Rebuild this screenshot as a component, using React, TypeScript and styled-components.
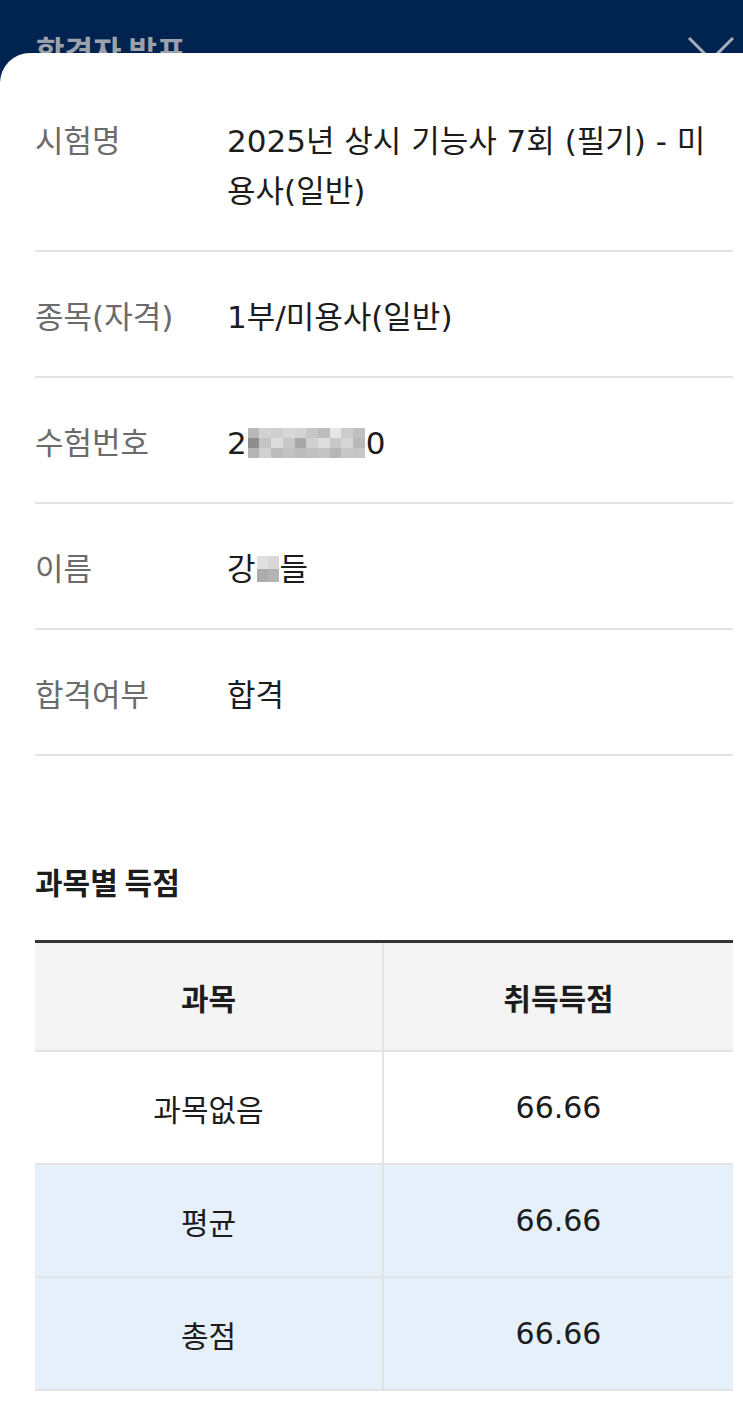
import React from "react";
import styled, { createGlobalStyle } from "styled-components";

const Global = createGlobalStyle`
  html, body { margin: 0; padding: 0; background: #ffffff; }
  body { font-family: "DejaVu Sans", "Noto Sans CJK KR", sans-serif; }
  * { box-sizing: border-box; }
`;

const Page = styled.div`
  width: 743px;
  height: 1415px;
  background: #002350;
  overflow: hidden;
`;

const TopBar = styled.div`
  height: 53px;
  padding: 0 9px 0 36px;
  display: flex;
  align-items: flex-start;
  justify-content: space-between;
  overflow: hidden;
`;

const Title = styled.div`
  margin-top: 31px;
  font-family: "Noto Sans CJK KR", sans-serif;
  font-size: 31px;
  font-weight: 700;
  color: #9ca2ac;
  line-height: 1.2;
`;

const CloseIcon = styled.svg`
  width: 46px;
  height: 46px;
  margin-top: 37px;
  flex-shrink: 0;
`;

const Sheet = styled.div`
  background: #ffffff;
  border-radius: 30px 0 0 0;
  height: 1362px;
  padding: 23px 10px 0 35px;
`;

const InfoRow = styled.div`
  display: flex;
  padding: 40px 0 34px;
  border-bottom: 2px solid #e3e3e3;
`;

const Label = styled.div`
  width: 192px;
  flex-shrink: 0;
  font-size: 31px;
  line-height: 50px;
  color: #6b6b6b;
`;

const Value = styled.div`
  flex: 1;
  font-size: 31px;
  line-height: 50px;
  color: #1c1c1c;
  padding-right: 20px;
`;

const Inline = styled.div`
  display: flex;
  align-items: center;
`;

const Mosaic = styled.span<{ $w: number; $h: number; $rows: number }>`
  display: inline-grid;
  width: ${(p) => p.$w}px;
  height: ${(p) => p.$h}px;
  grid-auto-flow: column;
  grid-template-rows: repeat(${(p) => p.$rows}, 1fr);
  margin: 0 1px;
`;

const Cell = styled.span<{ $c: string }>`
  background: ${(p) => p.$c};
`;

const SectionTitle = styled.div`
  margin-top: 105px;
  font-family: "Noto Sans CJK KR", sans-serif;
  font-size: 30px;
  font-weight: 700;
  color: #1c1c1c;
  line-height: 40px;
`;

const Table = styled.div`
  margin-top: 39px;
  border-top: 3px solid #333333;
  display: grid;
  grid-template-columns: 349px 349px;
`;

const TCell = styled.div<{ $bg: string; $head?: boolean; $h: number }>`
  height: ${(p) => p.$h}px;
  background: ${(p) => p.$bg};
  display: flex;
  align-items: center;
  justify-content: center;
  font-size: 30px;
  font-weight: ${(p) => (p.$head ? 700 : 400)};
  font-family: ${(p) => (p.$head ? `"Noto Sans CJK KR", sans-serif` : `"DejaVu Sans", "Noto Sans CJK KR", sans-serif`)};
  color: #1c1c1c;
  border-bottom: 2px solid #e3e3e3;
  &:nth-child(odd) {
    border-right: 2px solid #e3e3e3;
  }
`;

const mosaicNum = [
  "#b8b8b8", "#8e8e8e", "#b4b4b4",
  "#d2d2d2", "#c4c4c4", "#d0d0d0",
  "#cfcfcf", "#dcdcdc", "#bcbcbc",
  "#d8d8d8", "#c8c8c8", "#c2c2c2",
  "#d4d4d4", "#a8a8a8", "#bcbcbc",
  "#c6c6c6", "#d0d0d0", "#c0c0c0",
  "#bdbdbd", "#dddddd", "#c4c4c4",
  "#e6e6e6", "#c8c8c8", "#b6b6b6",
  "#cccccc", "#d6d6d6", "#c8c8c8",
  "#c0c0c0", "#b8b8b8", "#c6c6c6",
];

const mosaicName = ["#e0e0e0", "#ababab", "#d8d8d8", "#b3b3b3"];

const scores = [
  { name: "과목없음", score: "66.66", bg: "#ffffff" },
  { name: "평균", score: "66.66", bg: "#e6f0fa" },
  { name: "총점", score: "66.66", bg: "#e6f0fa" },
];

export default function App() {
  return (
    <Page>
      <Global />
      <TopBar>
        <Title>합격자 발표</Title>
        <CloseIcon viewBox="0 0 46 46">
          <path d="M1 1 L45 45 M45 1 L1 45" stroke="#a8b0bd" strokeWidth="3" fill="none" />
        </CloseIcon>
      </TopBar>
      <Sheet>
        <InfoRow>
          <Label>시험명</Label>
          <Value>2025년 상시 기능사 7회 (필기) - 미용사(일반)</Value>
        </InfoRow>
        <InfoRow>
          <Label>종목(자격)</Label>
          <Value>1부/미용사(일반)</Value>
        </InfoRow>
        <InfoRow>
          <Label>수험번호</Label>
          <Value>
            <Inline>
              2
              <Mosaic $w={117} $h={31} $rows={3}>
                {mosaicNum.map((c, i) => (
                  <Cell key={i} $c={c} />
                ))}
              </Mosaic>
              0
            </Inline>
          </Value>
        </InfoRow>
        <InfoRow>
          <Label>이름</Label>
          <Value>
            <Inline>
              강
              <Mosaic $w={22} $h={26} $rows={2}>
                {mosaicName.map((c, i) => (
                  <Cell key={i} $c={c} />
                ))}
              </Mosaic>
              들
            </Inline>
          </Value>
        </InfoRow>
        <InfoRow>
          <Label>합격여부</Label>
          <Value>합격</Value>
        </InfoRow>
        <SectionTitle>과목별 득점</SectionTitle>
        <Table>
          <TCell $bg="#f4f4f4" $head $h={109}>과목</TCell>
          <TCell $bg="#f4f4f4" $head $h={109}>취득득점</TCell>
          {scores.map((s) => (
            <React.Fragment key={s.name}>
              <TCell $bg={s.bg} $h={113}>{s.name}</TCell>
              <TCell $bg={s.bg} $h={113}>{s.score}</TCell>
            </React.Fragment>
          ))}
        </Table>
      </Sheet>
    </Page>
  );
}
